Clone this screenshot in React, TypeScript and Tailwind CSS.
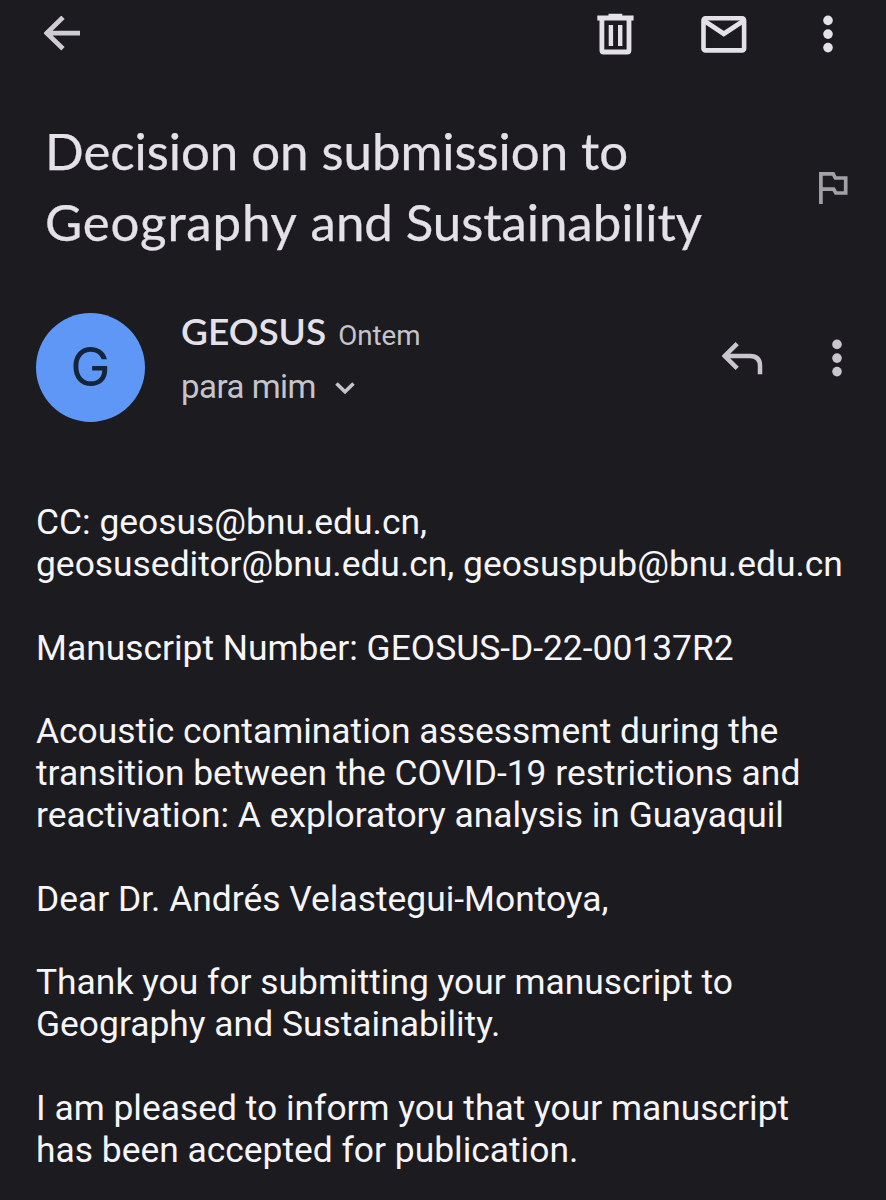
import type { ReactNode } from 'react';

interface IconProps {
  width: number;
  height: number;
  className: string;
  children: ReactNode;
}

function Icon({ width, height, className, children }: IconProps) {
  return (
    <svg width={width} height={height} viewBox={`0 0 ${width} ${height}`} fill="none" className={className}>
      {children}
    </svg>
  );
}

function MoreIcon({ className }: { className: string }) {
  return (
    <Icon width={10} height={38} className={className}>
      <circle cx="5" cy="5.4" r="4.8" fill="currentColor" />
      <circle cx="5" cy="19.1" r="4.8" fill="currentColor" />
      <circle cx="5" cy="32.6" r="4.8" fill="currentColor" />
    </Icon>
  );
}

const paragraphs = [
  ['CC: geosus@bnu.edu.cn,', 'geosuseditor@bnu.edu.cn, geosuspub@bnu.edu.cn'],
  ['Manuscript Number: GEOSUS-D-22-00137R2'],
  [
    'Acoustic contamination assessment during the',
    'transition between the COVID-19 restrictions and',
    'reactivation: A exploratory analysis in Guayaquil',
  ],
  ['Dear Dr. Andrés Velastegui-Montoya,'],
  ['Thank you for submitting your manuscript to', 'Geography and Sustainability.'],
  ['I am pleased to inform you that your manuscript', 'has been accepted for publication.'],
];

function Toolbar() {
  return (
    <header className="flex h-[68px] items-start pl-11">
      <button aria-label="Voltar" className="mt-4">
        <Icon width={38} height={36} className="text-[#cfccd4]">
          <path d="M19 1.3L2.8 17.1L19 32.8M3 17.1H36" stroke="currentColor" strokeWidth="4.8" />
        </Icon>
      </button>
      <button aria-label="Excluir" className="mt-[13px] ml-[515px]">
        <Icon width={37} height={42} className="text-[#e4e1e8]">
          <path d="M0.3 2.5H11.5V0.8H25.3V2.5H36.6V7.5H0.3Z" fill="currentColor" />
          <path d="M4.9 6V37.2Q4.9 39 6.7 39H30.2Q32 39 32 37.2V6" stroke="currentColor" strokeWidth="4.8" />
          <path d="M13.9 12V33M23.2 12V33" stroke="currentColor" strokeWidth="4.4" />
        </Icon>
      </button>
      <button aria-label="Marcar como não lida" className="mt-[15px] ml-[67px]">
        <Icon width={46} height={38} className="text-[#e4e1e8]">
          <rect x="2.5" y="3.2" width="40.6" height="32.2" rx="2" stroke="currentColor" strokeWidth="4.6" />
          <path d="M3.5 6L22.8 18.8L42.2 6" stroke="currentColor" strokeWidth="4.8" />
        </Icon>
      </button>
      <button aria-label="Mais opções" className="mt-[15px] ml-[76px]">
        <MoreIcon className="text-[#e4e1e8]" />
      </button>
    </header>
  );
}

function Subject() {
  return (
    <section className="flex h-[232px] items-start pl-[45px]">
      <h1 className="mt-[47px] w-[774px] font-['Lato',sans-serif] text-[51px] leading-[71px] text-[#e4e1e8] [-webkit-text-stroke:0.25px_#e4e1e8]">
        <span className="block tracking-[-0.05px] whitespace-nowrap">Decision on submission to</span>
        <span className="block tracking-[-0.06px] whitespace-nowrap">
          <span className="tracking-[0.8px]">Geography</span> and Sustainability
        </span>
      </h1>
      <button aria-label="Importante" className="mt-[104px]">
        <Icon width={30} height={33} className="text-[#a3a1a8]">
          <path d="M1.9 32V1.9H14.2L16.4 6H26.7V21H16.9L14.6 17.2H1.9" stroke="currentColor" strokeWidth="3.7" />
        </Icon>
      </button>
    </section>
  );
}

function Sender() {
  return (
    <section className="flex h-[202px] items-start pl-9">
      <div className="mt-[13px] flex size-[109px] items-center justify-center rounded-full bg-[#5e97f6]">
        <span className="-mt-0.5 font-['Inter',sans-serif] text-[54px] leading-none text-[#14243a]">G</span>
      </div>
      <div className="ml-9 w-[541px]">
        <div className="mt-[7px] flex items-baseline leading-[48px]">
          <span className="font-['Lato',sans-serif] text-[37px] font-semibold text-[#e4e1e8]">GEOSUS</span>
          <span className="ml-3 text-[27.7px] text-[#c6c4cb]">Ontem</span>
        </div>
        <div className="flex items-center leading-[54px]">
          <span className="text-[33px] tracking-[-0.5px] text-[#c6c4cb]">para mim</span>
          <Icon width={20} height={14} className="mt-1 ml-[19px] text-[#c6c4cb]">
            <path d="M1.5 1.5L10 9.7L18.5 1.5" stroke="currentColor" strokeWidth="3.6" />
          </Icon>
        </div>
      </div>
      <button aria-label="Responder" className="mt-[42px]">
        <Icon width={41} height={34} className="text-[#c9c6ce]">
          <path d="M15.2 1.6L2.8 14L15.2 26.4M3 14H28Q38 14 38 24V32.2" stroke="currentColor" strokeWidth="4.5" />
        </Icon>
      </button>
      <button aria-label="Mais opções da mensagem" className="mt-[39px] ml-[69px]">
        <MoreIcon className="text-[#c9c6ce]" />
      </button>
    </section>
  );
}

export default function App() {
  return (
    <main className="h-[1200px] w-[886px] overflow-hidden bg-[#1c1b20] font-['Roboto',sans-serif]">
      <Toolbar />
      <Subject />
      <Sender />
      <article className="flex flex-col gap-[41.85px] pl-9 text-[35.4px] leading-[41.85px] text-[#f6f5f9]">
        {paragraphs.map((lines) => (
          <p key={lines[0]}>
            {lines.map((line) => (
              <span key={line} className="block whitespace-nowrap">
                {line}
              </span>
            ))}
          </p>
        ))}
      </article>
    </main>
  );
}
